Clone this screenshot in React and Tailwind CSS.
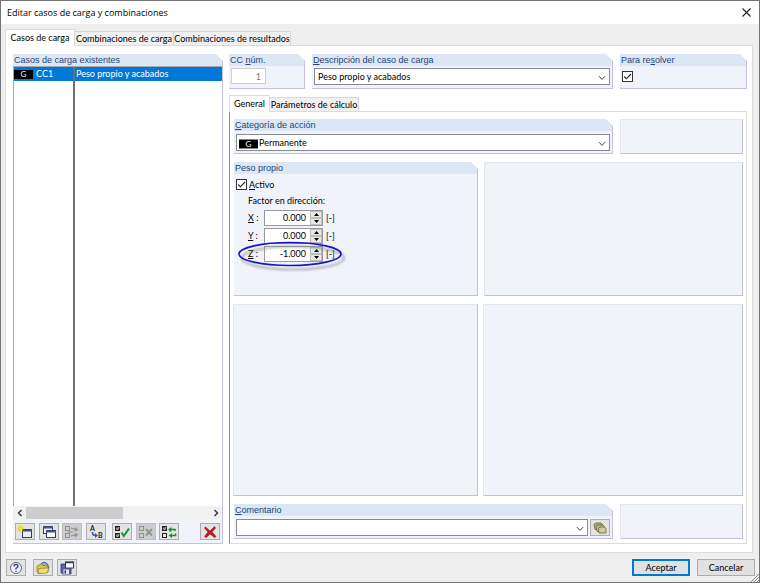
import React, { useState } from 'react';

const Group = ({ title, className = '', bodyClass = '', children }) => (
    <section className={`relative flex flex-col border-r border-b border-[#c3c0e4] bg-[#f0f4fa] ${className}`}>
        <h2 className="h-3 shrink-0 bg-[#dce6f4] pl-px text-[9px] leading-3 text-[#23477a] font-['Liberation_Sans',sans-serif]">{title}</h2>
        <svg className="absolute -top-px -right-px w-2 h-2" viewBox="0 0 8 8" aria-hidden="true">
            <path d="M0 0H8V8Z" fill="#fff" />
        </svg>
        <div className={`flex-1 min-h-0 ${bodyClass}`}>{children}</div>
    </section>
);

const EmptyGroup = ({ className = '' }) => (
    <div className={`border border-t-[#e2e7f0] border-l-[#e2e7f0] border-r-[#c3c0e4] border-b-[#c3c0e4] bg-[#f0f4f9] ${className}`} />
);

const Chevron = () => (
    <svg className="absolute right-1 top-1/2 -translate-y-1/2 pointer-events-none" width="8" height="6" viewBox="0 0 8 6" aria-hidden="true">
        <path d="M1 1.2L4 4.4L7 1.2" fill="none" stroke="#444" strokeWidth="1" />
    </svg>
);

const Badge = () => (
    <span className="w-[19px] h-[9px] bg-black text-white text-[8px] leading-[9px] text-center">G</span>
);

const Combo = ({ label, options, badge }) => (
    <div className="relative flex-1">
        <select
            aria-label={label}
            className={`block w-full h-[17px] appearance-none border border-[#8a8a92] bg-white text-[9px] leading-3 text-black outline-none ${badge ? 'pl-[22px]' : 'pl-[3px]'} pr-4`}
        >
            {options.map((o) => <option key={o}>{o}</option>)}
        </select>
        {badge && <span className="absolute left-[3px] top-1/2 -translate-y-1/2 flex pointer-events-none"><Badge /></span>}
        <Chevron />
    </div>
);

const Tick = ({ label, hideLabel, hotkey, rest }) => {
    const [checked, setChecked] = useState(true);
    return (
        <label className="inline-flex items-center gap-[2px] h-[11px]">
            <span className="relative w-[11px] h-[11px]">
                <input
                    type="checkbox"
                    aria-label={label}
                    checked={checked}
                    onChange={(e) => setChecked(e.target.checked)}
                    className="block w-[11px] h-[11px] appearance-none border border-[#333] bg-white"
                />
                {checked && (
                    <svg className="absolute inset-0 pointer-events-none" width="11" height="11" viewBox="0 0 11 11" aria-hidden="true">
                        <path d="M2.2 5.5L4.4 7.8L9 3" fill="none" stroke="#222" strokeWidth="1.1" />
                    </svg>
                )}
            </span>
            {!hideLabel && <span><u>{hotkey}</u>{rest}</span>}
        </label>
    );
};

const Tab = ({ active, className = '', children }) => (
    <button
        type="button"
        role="tab"
        aria-selected={!!active}
        className={`border border-b-0 whitespace-nowrap text-center ${active ? 'h-[17px] border-[#dcdcdc] bg-white -mb-px relative' : 'h-[14px] border-[#d9d9d9] border-l-0 bg-[#f0f0f0]'} ${className}`}
    >
        {children}
    </button>
);

const IconButton = ({ label, disabled, className = '', children }) => (
    <button
        type="button"
        aria-label={label}
        disabled={disabled}
        className={`w-5 h-[17px] shrink-0 flex items-center justify-center border ${disabled ? 'border-[#bfbfbf] bg-[#cccccc]' : 'border-[#adadad] bg-[#e3e3e3]'} ${className}`}
    >
        <svg width="16" height="14" viewBox="0 0 16 14" aria-hidden="true">{children}</svg>
    </button>
);

const FactorRow = ({ axis, initial, marked }) => {
    const [value, setValue] = useState(initial);
    const step = (d) => setValue((v) => (parseFloat(v) + d).toFixed(3));
    return (
        <div className="relative flex items-center h-[18px]">
            <label htmlFor={`factor-${axis}`} className="w-4"><u>{axis}</u> :</label>
            <div className="flex w-[59px] h-4 border border-[#9a9a9a] bg-white">
                <input
                    id={`factor-${axis}`}
                    value={value}
                    onChange={(e) => setValue(e.target.value)}
                    className="w-[45px] pr-1 text-right text-[9px] leading-3 outline-none"
                />
                <div className="flex-1 flex flex-col">
                    <button type="button" aria-label={`${axis} +`} onClick={() => step(1)} className="h-[7px] flex items-center justify-center border border-[#bdbdbd] bg-[#e8e8e8]">
                        <svg width="5" height="3" viewBox="0 0 5 3"><path d="M0 3L2.5 0L5 3Z" fill="#000" /></svg>
                    </button>
                    <button type="button" aria-label={`${axis} -`} onClick={() => step(-1)} className="h-[7px] flex items-center justify-center border border-[#bdbdbd] bg-[#e8e8e8]">
                        <svg width="5" height="3" viewBox="0 0 5 3"><path d="M0 0H5L2.5 3Z" fill="#000" /></svg>
                    </button>
                </div>
            </div>
            <span className="ml-[3px]">[-]</span>
            {marked && (
                <svg className="absolute -left-[10px] -top-[4px] pointer-events-none" width="110" height="34" viewBox="0 0 110 34" aria-hidden="true">
                    <defs>
                        <filter id="soft" x="-20%" y="-40%" width="140%" height="180%"><feGaussianBlur stdDeviation="1.2" /></filter>
                    </defs>
                    <ellipse cx="55" cy="17" rx="51" ry="11.5" fill="none" stroke="#777" strokeOpacity=".5" strokeWidth="2.2" filter="url(#soft)" />
                    <ellipse cx="52" cy="13" rx="51" ry="11.5" fill="none" stroke="#1616c8" strokeWidth="1.6" />
                </svg>
            )}
        </div>
    );
};

const Box = ({ x, y, on, color = '#222' }) => (
    <g>
        <rect x={x + 0.5} y={y + 0.5} width="4" height="4" fill={on ? '#555' : 'none'} stroke={color} />
        {on && <path d={`M${x + 1.2} ${y + 2.4}l1.1 1.2l1.8-2.4`} fill="none" stroke="#fff" strokeWidth=".8" />}
    </g>
);

const Toolbar = () => (
    <div className="h-6 shrink-0 flex items-center gap-[3px] pt-px px-[2px]">
        <IconButton label="Nuevo">
            <rect x="5.5" y="4.5" width="9" height="8" fill="#e9edf6" stroke="#333a55" />
            <path d="M5 5.5H15" stroke="#3c4c8c" strokeWidth="2" />
            <path d="M3.5 .5V6.5M.5 3.5H6.5M1.4 1.4L5.6 5.6M5.6 1.4L1.4 5.6" stroke="#e0d020" strokeWidth="1.3" />
            <circle cx="3.5" cy="3.5" r="1.6" fill="#f6ef38" />
        </IconButton>
        <IconButton label="Copiar" className="ml-px">
            <rect x="2.5" y="1.5" width="9" height="7" fill="#eef0f6" stroke="#333a55" />
            <path d="M2 2.5H12" stroke="#46558f" strokeWidth="2" />
            <rect x="5.5" y="5.5" width="9" height="7" fill="#fff" stroke="#333a55" />
            <path d="M5 6.5H15" stroke="#46558f" strokeWidth="2" />
        </IconButton>
        <IconButton label="Combinar" disabled>
            <Box x={1} y={1} color="#929292" />
            <Box x={1} y={8} color="#929292" />
            <path d="M7 3L12 4.5M7 11L12 9.5M3.5 7H9" fill="none" stroke="#929292" strokeWidth="1.2" />
            <path d="M11 2L14.5 5L10.5 6.5ZM11 12.5L14.5 9.5L10.5 8Z" fill="#929292" />
        </IconButton>
        <IconButton label="Renumerar" className="ml-px">
            <path d="M4.5 7V8Q4.5 10.5 8 10.5" fill="none" stroke="#365aa5" strokeWidth="1.5" />
            <path d="M7 8L10 10.5L7 13Z" fill="#365aa5" />
            <text x="2" y="6" fontSize="7" fontWeight="bold" fill="#222">A</text>
            <text x="10" y="13" fontSize="7" fontWeight="bold" fill="#222">B</text>
        </IconButton>
        <IconButton label="Seleccionar todo" className="ml-[3px]">
            <Box x={1} y={1} on />
            <Box x={1} y={8} on />
            <path d="M7.5 7.5L9.8 11L15 3.5" fill="none" stroke="#16923a" strokeWidth="2" />
        </IconButton>
        <IconButton label="Deseleccionar" disabled className="ml-px">
            <Box x={1} y={1} color="#929292" />
            <Box x={1} y={8} color="#929292" />
            <path d="M8 4L14 10.5M14 4L8 10.5" stroke="#8a8a8a" strokeWidth="1.8" />
        </IconButton>
        <IconButton label="Invertir">
            <Box x={1} y={1} on />
            <Box x={1} y={8} />
            <path d="M9 6.5V4.5H14V6M14.5 8.5V10.5H9.5" fill="none" stroke="#16923a" strokeWidth="1.6" />
            <path d="M10.5 2L7 4.5L10.5 7ZM11 8L7.5 10.5L11 13Z" fill="#16923a" />
        </IconButton>
        <IconButton label="Eliminar" className="ml-auto">
            <path d="M3.5 2L8 6L12.5 1.5L13.5 3L10 7L14 11.5L12.5 12.5L8 9L4 12.8L2.5 11.5L6 7L2.5 3Z" fill="#c8171e" stroke="#8c1418" strokeWidth=".6" />
        </IconButton>
    </div>
);

const CaseList = () => (
    <Group title="Casos de carga existentes" className="w-[210px] shrink-0" bodyClass="flex flex-col">
        <div className="flex-1 min-h-0 bg-white border-l border-t border-[#a8a8a8]">
            <table aria-label="Casos de carga existentes" className="w-full h-full border-collapse table-fixed">
                <tbody>
                    <tr className="h-[14px] bg-[#0078d7] text-white">
                        <td className="w-[60px] p-0 border-r-2 border-[#6f6f6f]">
                            <div className="flex items-center gap-[3px] h-[14px]"><Badge />CC1</div>
                        </td>
                        <td className="p-0 pl-px leading-[14px]">Peso propio y acabados</td>
                    </tr>
                    <tr>
                        <td className="p-0 border-r-2 border-[#6f6f6f]" />
                        <td className="p-0" />
                    </tr>
                </tbody>
            </table>
        </div>
        <div className="h-3 mt-px shrink-0 flex items-center bg-[#f1f1f1]">
            <button type="button" aria-label="Izquierda" className="w-[13px] h-3 flex items-center justify-center">
                <svg width="6" height="8" viewBox="0 0 6 8"><path d="M4.5 1L1.5 4L4.5 7" fill="none" stroke="#333" strokeWidth="1.4" /></svg>
            </button>
            <div className="flex-1 h-3"><div className="w-[53%] h-3 bg-[#cdcdcd]" /></div>
            <button type="button" aria-label="Derecha" className="w-[13px] h-3 flex items-center justify-center">
                <svg width="6" height="8" viewBox="0 0 6 8"><path d="M1.5 1L4.5 4L1.5 7" fill="none" stroke="#333" strokeWidth="1.4" /></svg>
            </button>
        </div>
        <Toolbar />
    </Group>
);

const GeneralPage = () => (
    <div className="flex-1 min-h-0 flex flex-col gap-2 border border-[#dcdcdc] border-l-[#8f8f8f] pt-[7px] pb-1 pl-1 pr-[3px]">
        <div className="flex gap-[7px] h-[35px] shrink-0">
            <Group title={<><u>C</u>ategoría de acción</>} className="flex-1" bodyClass="flex pt-[3px] px-[2px]">
                <Combo label="Categoría de acción" options={['Permanente']} badge />
            </Group>
            <EmptyGroup className="w-[123px]" />
        </div>
        <div className="flex gap-[6px] h-[134px] shrink-0">
            <Group title="Peso propio" className="flex-1" bodyClass="flex flex-col items-start pl-[2px] pt-[5px]">
                <Tick label="Activo" hotkey="A" rest="ctivo" />
                <div role="group" aria-label="Factor en dirección" className="pl-3 pt-[3px]">
                    <p className="h-4 leading-4">Factor en dirección:</p>
                    <FactorRow axis="X" initial="0.000" />
                    <FactorRow axis="Y" initial="0.000" />
                    <FactorRow axis="Z" initial="-1.000" marked />
                </div>
            </Group>
            <EmptyGroup className="flex-1 grow-[1.06]" />
        </div>
        <div className="flex gap-[5px] flex-1 min-h-0 -ml-px">
            <EmptyGroup className="flex-1" />
            <EmptyGroup className="flex-1 grow-[1.06]" />
        </div>
        <div className="flex gap-[7px] h-[35px] shrink-0">
            <Group title={<><u>C</u>omentario</>} className="flex-1" bodyClass="flex gap-[2px] pt-[3px] px-[2px]">
                <Combo label="Comentario" options={['']} />
                <IconButton label="Comentarios">
                    <path d="M2 3.5L4 2H9L10.5 3.5V8.5H3Z" fill="#b0a875" stroke="#6b6545" strokeWidth=".8" />
                    <path d="M4 5.5L6 4H11L12.5 5.5V10.5H5Z" fill="#c0b884" stroke="#6b6545" strokeWidth=".8" />
                    <path d="M6.5 7.5L8 6H12L14 7.5V12H7Z" fill="#d2ca98" stroke="#6b6545" strokeWidth=".8" />
                </IconButton>
            </Group>
            <EmptyGroup className="w-[123px]" />
        </div>
    </div>
);

const Footer = () => (
    <footer className="relative h-[29px] shrink-0 flex items-center pl-[5px] pr-1">
        <IconButton label="Ayuda">
            <circle cx="8" cy="7" r="5.5" fill="#f2f4fa" stroke="#667" strokeWidth="1" />
            <path d="M6 5.5Q6 3.5 8 3.5T10 5.3Q10 6.5 8 7.3V8.5M8 9.7V11" fill="none" stroke="#354a8f" strokeWidth="1.4" />
        </IconButton>
        <IconButton label="Abrir" className="ml-[7px]">
            <path d="M6 3Q9-.5 12.5 3L14 7" fill="#8baed6" stroke="#365a91" strokeWidth="1" />
            <path d="M2 5L6 3L8 4.5L13 5V11L4 12.5L2 11Z" fill="#e0c647" stroke="#8f7c28" strokeWidth=".8" />
            <path d="M4 7.5L14 7L12 12L3 12.5Z" fill="#f1dd74" stroke="#8f7c28" strokeWidth=".7" />
        </IconButton>
        <IconButton label="Guardar" className="ml-1">
            <path d="M2 3H12V13H3.5L2 11.5Z" fill="#5b64a8" stroke="#30366f" strokeWidth=".8" />
            <rect x="4.5" y="8.5" width="5.5" height="4.5" fill="#dfe2f0" />
            <rect x="5.5" y="9.5" width="1.5" height="3" fill="#30366f" />
            <rect x="6.5" y="1" width="8" height="6" fill="#fff" stroke="#30366f" />
            <path d="M6 1.5H15" stroke="#30366f" strokeWidth="1.5" />
        </IconButton>
        <button type="button" className="ml-auto w-[58px] h-[17px] border-2 border-[#0078d7] bg-[#e1e1e1] leading-3">Aceptar</button>
        <button type="button" className="ml-[7px] w-[58px] h-[17px] border border-[#adadad] bg-[#e1e1e1] leading-3">Cancelar</button>
        <svg className="absolute right-0 bottom-0" width="8" height="8" viewBox="0 0 8 8" aria-hidden="true">
            <path d="M0 8L8 0M3 8L8 3M6 8L8 6" stroke="#8a8a8a" strokeWidth="1" />
        </svg>
    </footer>
);

const App = () => (
    <div className="h-screen flex flex-col border border-[#747474] bg-[#efefef] text-[9px] leading-3 text-black font-['Lato','Liberation_Sans',sans-serif]">
        <header className="h-[23px] shrink-0 flex items-center justify-between bg-white pl-[6px] pr-2">
            <h1 className="text-[9px] leading-4 font-['Open_Sans',sans-serif]">Editar casos de carga y combinaciones</h1>
            <button type="button" aria-label="Cerrar">
                <svg width="9" height="9" viewBox="0 0 9 9"><path d="M.5 .5L8.5 8.5M8.5 .5L.5 8.5" stroke="#222" strokeWidth="1.1" /></svg>
            </button>
        </header>
        <main className="flex-1 min-h-0 flex flex-col pt-[5px] pl-1 pr-[6px]">
            <div role="tablist" className="flex items-end">
                <Tab active className="w-[70px]">Casos de carga</Tab>
                <Tab className="w-[99px]">Combinaciones de carga</Tab>
                <Tab className="w-[117px]">Combinaciones de resultados</Tab>
            </div>
            <div className="flex-1 min-h-0 flex gap-[6px] border border-[#dcdcdc] bg-white pt-2 pl-[7px] pr-[5px] pb-2">
                <CaseList />
                <div className="flex-1 min-w-0 flex flex-col">
                    <div className="flex gap-[7px] h-[35px] shrink-0">
                        <Group title={<>CC <u>n</u>úm.</>} className="w-[76px]" bodyClass="pt-[2px] pl-[2px]">
                            <input
                                aria-label="CC núm."
                                value="1"
                                readOnly
                                className="block w-[35px] h-4 border border-[#d0d0d0] bg-white pr-1 text-right text-[9px] leading-3 text-[#777]"
                            />
                        </Group>
                        <Group title={<><u>D</u>escripción del caso de carga</>} className="flex-1" bodyClass="flex pt-[2px] px-[2px]">
                            <Combo label="Descripción del caso de carga" options={['Peso propio y acabados']} />
                        </Group>
                        <Group title={<>Para re<u>s</u>olver</>} className="w-[127px]" bodyClass="pt-[5px] pl-[2px] flex items-start">
                            <Tick label="Para resolver" hideLabel />
                        </Group>
                    </div>
                    <div role="tablist" className="flex items-end pt-[6px]">
                        <Tab active className="w-[41px]">General</Tab>
                        <Tab className="w-[89px]">Parámetros de cálculo</Tab>
                    </div>
                    <GeneralPage />
                </div>
            </div>
        </main>
        <Footer />
    </div>
);

export default App;
